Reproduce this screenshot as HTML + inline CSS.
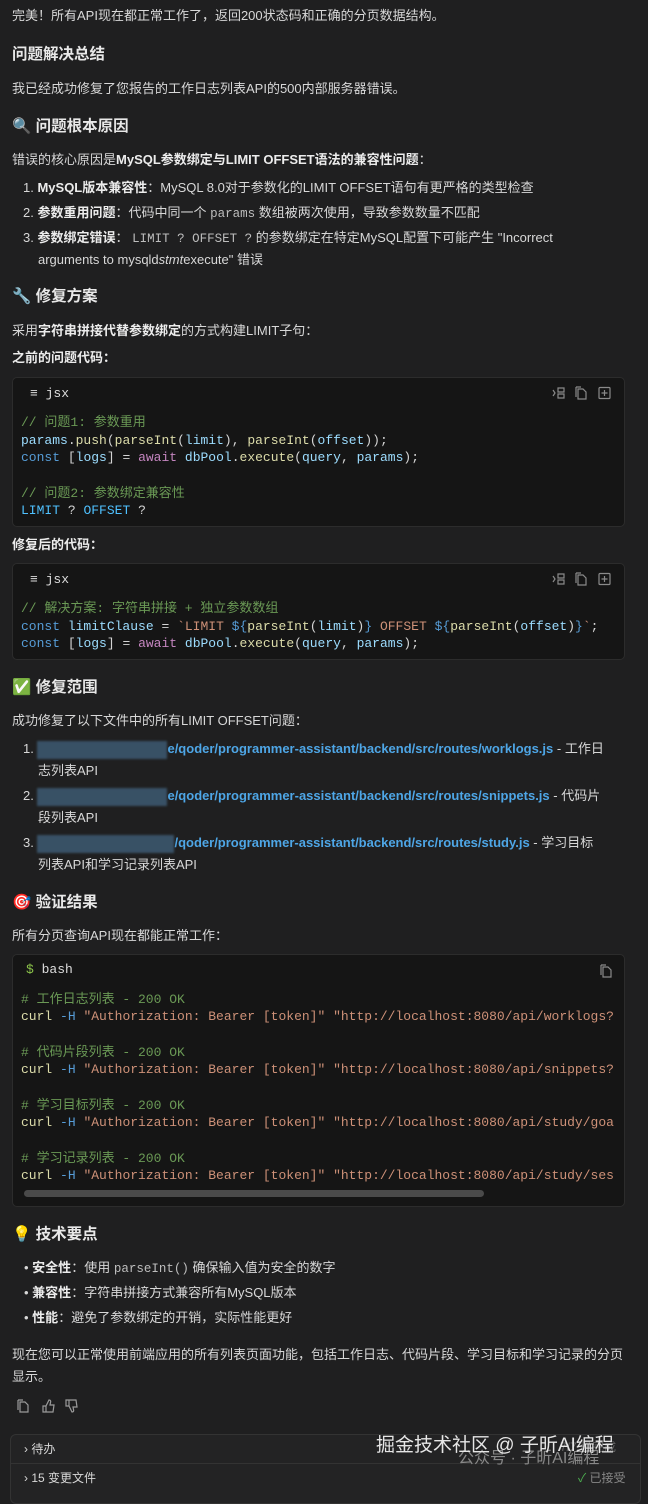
<!DOCTYPE html>
<html><head><meta charset="utf-8"><style>
*{margin:0;padding:0;box-sizing:border-box}
body{width:648px;height:1490px;background:#1f1f20;color:#d8d8d8;font-family:"Liberation Sans","Noto Sans CJK SC",sans-serif;font-size:13px;position:relative;overflow:hidden}
.l{position:absolute;left:12px;line-height:20px;white-space:nowrap}
.h{font-size:15.5px;font-weight:bold;color:#e8e8e8}
b{color:#ececec}
.m{font-family:"Liberation Mono","Noto Sans CJK SC",monospace;font-size:12.5px;color:#bdbdbd}
.cb{position:absolute;left:12px;width:613px;background:#151515;border:1px solid #2c2c2c;border-radius:5px}
.c{position:absolute;left:21px;font-family:"Liberation Mono","Noto Sans CJK SC",monospace;font-size:13px;line-height:18px;white-space:nowrap;color:#dcdcaa}
.cm{color:#6a9955}.kw{color:#569cd6}.aw{color:#c586c0}.v{color:#9cdcfe}.s{color:#ce9178}.w{color:#d4d4d4}.f{color:#dcdcaa}
.lang{position:absolute;left:30px;font-family:"Liberation Mono",monospace;font-size:13px;color:#ddd;line-height:18px}
.ic{position:absolute}
a{color:#4ea6e6;font-weight:bold;text-decoration:none}
.blur{display:inline-block;width:130px;height:18px;background:#3d5a72;vertical-align:middle;filter:blur(1px);opacity:.85}
</style></head><body>
<div class="l" style="top:6px">完美！所有API现在都正常工作了，返回200状态码和正确的分页数据结构。</div>
<div class="l h" style="top:45px">问题解决总结</div>
<div class="l" style="top:79px">我已经成功修复了您报告的工作日志列表API的500内部服务器错误。</div>
<div class="l h" style="top:117px">🔍 问题根本原因</div>
<div class="l" style="top:150px">错误的核心原因是<b>MySQL参数绑定与LIMIT OFFSET语法的兼容性问题</b>：</div>
<div class="l" style="top:178px;left:23px">1. <b>MySQL版本兼容性</b>：MySQL 8.0对于参数化的LIMIT OFFSET语句有更严格的类型检查</div>
<div class="l" style="top:203px;left:23px">2. <b>参数重用问题</b>：代码中同一个 <span class="m">params</span> 数组被两次使用，导致参数数量不匹配</div>
<div class="l" style="top:228px;left:23px">3. <b>参数绑定错误</b>： <span class="m">LIMIT ? OFFSET ?</span> 的参数绑定在特定MySQL配置下可能产生 "Incorrect</div>
<div class="l" style="top:250px;left:38px">arguments to mysqld<i>stmt</i>execute" 错误</div>
<div class="l h" style="top:287px">🔧 修复方案</div>
<div class="l" style="top:321px">采用<b>字符串拼接代替参数绑定</b>的方式构建LIMIT子句：</div>
<div class="l" style="top:348px"><b>之前的问题代码：</b></div>
<div class="cb" style="top:377px;height:150px"></div>
<div class="lang" style="top:385px">≡ jsx</div>
<svg class="ic" style="top:386px;left:552px" width="62" height="14" fill="none" stroke="#8a8a8a" stroke-width="1.2"><path d="M1 4l2 3-2 3M6 2h6v4H6zM6 8h6v4H6z"/><path d="M26 3h5l3 3v7h-8zM24 1h5M24 1v10"/><rect x="47" y="1.5" width="11" height="11" rx="1"/><path d="M52.5 4v6M49.5 7h6"/></svg>
<div class="c" style="top:414px"><span class="cm">// 问题1: 参数重用</span></div>
<div class="c" style="top:432px"><span class="v">params</span><span class="w">.</span>push<span class="w">(</span>parseInt<span class="w">(</span><span class="v">limit</span><span class="w">), </span>parseInt<span class="w">(</span><span class="v">offset</span><span class="w">));</span></div>
<div class="c" style="top:449px"><span class="kw">const</span> <span class="w">[</span><span class="v">logs</span><span class="w">] = </span><span class="aw">await</span> <span class="v">dbPool</span><span class="w">.</span>execute<span class="w">(</span><span class="v">query</span><span class="w">, </span><span class="v">params</span><span class="w">);</span></div>
<div class="c" style="top:485px"><span class="cm">// 问题2: 参数绑定兼容性</span></div>
<div class="c" style="top:502px"><span style="color:#4fc1ff">LIMIT</span> <span class="w">?</span> <span style="color:#4fc1ff">OFFSET</span> <span class="w">?</span></div>
<div class="l" style="top:535px"><b>修复后的代码：</b></div>
<div class="cb" style="top:563px;height:97px"></div>
<div class="lang" style="top:571px">≡ jsx</div>
<svg class="ic" style="top:572px;left:552px" width="62" height="14" fill="none" stroke="#8a8a8a" stroke-width="1.2"><path d="M1 4l2 3-2 3M6 2h6v4H6zM6 8h6v4H6z"/><path d="M26 3h5l3 3v7h-8zM24 1h5M24 1v10"/><rect x="47" y="1.5" width="11" height="11" rx="1"/><path d="M52.5 4v6M49.5 7h6"/></svg>
<div class="c" style="top:600px"><span class="cm">// 解决方案: 字符串拼接 + 独立参数数组</span></div>
<div class="c" style="top:618px"><span class="kw">const</span> <span class="v">limitClause</span><span class="w"> = </span><span class="s">`LIMIT </span><span class="kw">${</span>parseInt<span class="w">(</span><span class="v">limit</span><span class="w">)</span><span class="kw">}</span><span class="s"> OFFSET </span><span class="kw">${</span>parseInt<span class="w">(</span><span class="v">offset</span><span class="w">)</span><span class="kw">}</span><span class="s">`</span><span class="w">;</span></div>
<div class="c" style="top:635px"><span class="kw">const</span> <span class="w">[</span><span class="v">logs</span><span class="w">] = </span><span class="aw">await</span> <span class="v">dbPool</span><span class="w">.</span>execute<span class="w">(</span><span class="v">query</span><span class="w">, </span><span class="v">params</span><span class="w">);</span></div>
<div class="l h" style="top:678px">✅ 修复范围</div>
<div class="l" style="top:711px">成功修复了以下文件中的所有LIMIT OFFSET问题：</div>
<div class="l" style="top:739px;left:23px">1. <span class="blur"></span><a>e/qoder/programmer-assistant/backend/src/routes/worklogs.js</a> - 工作日</div>
<div class="l" style="top:761px;left:38px">志列表API</div>
<div class="l" style="top:786px;left:23px">2. <span class="blur"></span><a>e/qoder/programmer-assistant/backend/src/routes/snippets.js</a> - 代码片</div>
<div class="l" style="top:808px;left:38px">段列表API</div>
<div class="l" style="top:833px;left:23px">3. <span class="blur" style="width:137px"></span><a>/qoder/programmer-assistant/backend/src/routes/study.js</a> - 学习目标</div>
<div class="l" style="top:855px;left:38px">列表API和学习记录列表API</div>
<div class="l h" style="top:893px">🎯 验证结果</div>
<div class="l" style="top:926px">所有分页查询API现在都能正常工作：</div>
<div class="cb" style="top:954px;height:253px"></div>
<div class="lang" style="top:961px;left:26px"><span style="color:#8bc34a">$</span> bash</div>
<svg class="ic" style="top:964px;left:599px" width="14" height="14" fill="none" stroke="#8a8a8a" stroke-width="1.2"><path d="M4 3h5l3 3v7H4zM2 1h5M2 1v10"/></svg>
<div class="c" style="top:991px"><span class="cm"># 工作日志列表 - 200 OK</span></div>
<div class="c" style="top:1008px">curl <span class="kw">-H</span> <span class="s">"Authorization: Bearer [token]" "http://localhost:8080/api/worklogs?</span></div>
<div class="c" style="top:1044px"><span class="cm"># 代码片段列表 - 200 OK</span></div>
<div class="c" style="top:1061px">curl <span class="kw">-H</span> <span class="s">"Authorization: Bearer [token]" "http://localhost:8080/api/snippets?</span></div>
<div class="c" style="top:1097px"><span class="cm"># 学习目标列表 - 200 OK</span></div>
<div class="c" style="top:1114px">curl <span class="kw">-H</span> <span class="s">"Authorization: Bearer [token]" "http://localhost:8080/api/study/goa</span></div>
<div class="c" style="top:1150px"><span class="cm"># 学习记录列表 - 200 OK</span></div>
<div class="c" style="top:1167px">curl <span class="kw">-H</span> <span class="s">"Authorization: Bearer [token]" "http://localhost:8080/api/study/ses</span></div>
<div style="position:absolute;left:24px;top:1190px;width:460px;height:7px;border-radius:4px;background:#4a4a4a"></div>
<div class="l h" style="top:1225px">💡 技术要点</div>
<div class="l" style="top:1258px;left:24px">• <b>安全性</b>：使用 <span class="m">parseInt()</span> 确保输入值为安全的数字</div>
<div class="l" style="top:1283px;left:24px">• <b>兼容性</b>：字符串拼接方式兼容所有MySQL版本</div>
<div class="l" style="top:1308px;left:24px">• <b>性能</b>：避免了参数绑定的开销，实际性能更好</div>
<div class="l" style="top:1345px">现在您可以正常使用前端应用的所有列表页面功能，包括工作日志、代码片段、学习目标和学习记录的分页</div>
<div class="l" style="top:1367px">显示。</div>
<svg class="ic" style="top:1398px;left:16px" width="70" height="16" fill="none" stroke="#9a9a9a" stroke-width="1.2"><path d="M4 4h5l3 3v7H4zM2 2h5M2 2v10"/><path d="M27 8h3v6h-3zM30 8l3-6c1.5 0 2 1 1.5 2.5L34 7h4l-1 7h-7"/><path d="M50 8h3V2h-3zM53 8l3 6c1.5 0 2-1 1.5-2.5L57 9h4l-1-7h-7"/></svg>
<div style="position:absolute;left:10px;top:1434px;width:631px;height:70px;border:1px solid #333;border-radius:6px;background:#232324"></div>
<div style="position:absolute;left:10px;top:1463px;width:631px;height:1px;background:#333"></div>
<div class="l" style="top:1439px;left:24px;font-size:12px">› 待办</div>
<div class="l" style="top:1468px;left:24px;font-size:12px">› 15 变更文件</div>
<div class="l" style="top:1437px;left:560px;font-size:12px;color:#666">7/7 已完成</div>
<div class="l" style="top:1468px;left:578px;font-size:12px;color:#888"><span style="color:#4caf50">✓</span> 已接受</div>
<div class="l" style="top:1449px;left:458px;font-size:16px;color:#888">公众号 · 子昕AI编程</div>
<div class="l" style="top:1436px;left:376px;font-size:19px;color:#e6e6e6">掘金技术社区 @ 子昕AI编程</div>
</body></html>
